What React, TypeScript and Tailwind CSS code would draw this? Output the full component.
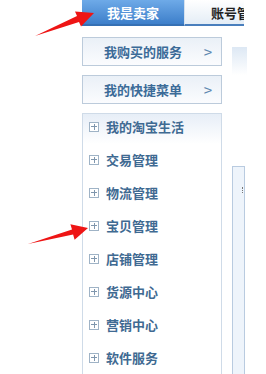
const menuItems = ["我的淘宝生活", "交易管理", "物流管理", "宝贝管理", "店铺管理", "货源中心", "营销中心", "软件服务"];

const font = { fontFamily: '"Noto Sans CJK SC", "Liberation Sans", sans-serif' };

const PlusBox = () => (
  <span className="relative inline-block w-[10px] h-[10px] border border-[#9fb3c6] bg-white shrink-0">
    <span className="absolute left-[1px] right-[1px] top-[3.5px] h-px bg-[#7f96ad]" />
    <span className="absolute top-[1px] bottom-[1px] left-[3.5px] w-px bg-[#7f96ad]" />
  </span>
);

const QuickButton = ({ label }: { label: string }) => (
  <div className="h-[29px] w-[140px] border border-[#bccbdb] bg-gradient-to-b from-[#eaf0f7] to-[#fbfcfe] flex items-center">
    <span className="ml-[21px] text-[13px] font-bold text-[#3b6b98] leading-none">{label}</span>
    <span className="ml-auto mr-[9px] text-[15px] text-[#5e88b0] leading-none">&gt;</span>
  </div>
);

export default function App() {
  return (
    <div className="relative w-[266px] h-[374px] bg-white overflow-hidden" style={font}>
      {/* tabs */}
      <div className="flex h-[26px] pl-[82px]">
        <div className="w-[102px] h-full bg-gradient-to-b from-[#6eaae8] to-[#3d7fca] border-b-2 border-[#3570b4] flex items-center justify-center">
          <span className="text-white font-bold text-[13px] leading-none">我是卖家</span>
        </div>
        <div className="w-[60px] h-full bg-gradient-to-b from-white to-[#e4edf6] border-b-2 border-[#4a7fbd] border-l border-l-[#d5e1ee] flex items-center pl-[26px] overflow-hidden whitespace-nowrap">
          <span className="text-[#222] font-bold text-[13px] leading-none">账号管理</span>
        </div>
      </div>

      <div className="flex pl-[82px] pt-[11px]">
        <div className="flex flex-col w-[140px]">
          <QuickButton label="我购买的服务" />
          <div className="h-[9px]" />
          <QuickButton label="我的快捷菜单" />
          <div className="h-[9px]" />
          <div className="border-l border-r border-t border-[#cfdbe8] h-[300px]">
            <div className="bg-gradient-to-b from-[#e7eef7] to-white h-[30px]" />
            <div className="-mt-[34px] flex flex-col">
              {menuItems.map((m) => (
                <div key={m} className="h-[33px] flex items-center pl-[6px]">
                  <PlusBox />
                  <span className="ml-[7px] text-[13px] font-bold text-[#3f6a92] leading-none">{m}</span>
                </div>
              ))}
            </div>
          </div>
        </div>
        <div className="ml-[10px] flex flex-col">
          <div className="mt-[10px] w-[15px] h-[28px] bg-gradient-to-b from-[#dde8f4] to-white" />
          <div className="mt-[91px] w-[13px] h-[300px] border-l border-t border-r border-[#b9cbe0] bg-[#eef4fb] relative">
            <span className="absolute right-[1px] top-[20px] w-px h-[6px] border-r border-dotted border-[#777]" />
          </div>
        </div>
      </div>

      {/* red arrows */}
      <svg className="absolute left-0 top-0 pointer-events-none" width="266" height="374">
        <polygon points="35,36 77,16 75,11.5 94,13 81,26.5 79,22" fill="#ee1515" />
        <polygon points="28,244 72,229.6 70.4,224.3 88,228 74.6,239.8 73.1,234.4" fill="#ee1515" />
      </svg>
    </div>
  );
}
